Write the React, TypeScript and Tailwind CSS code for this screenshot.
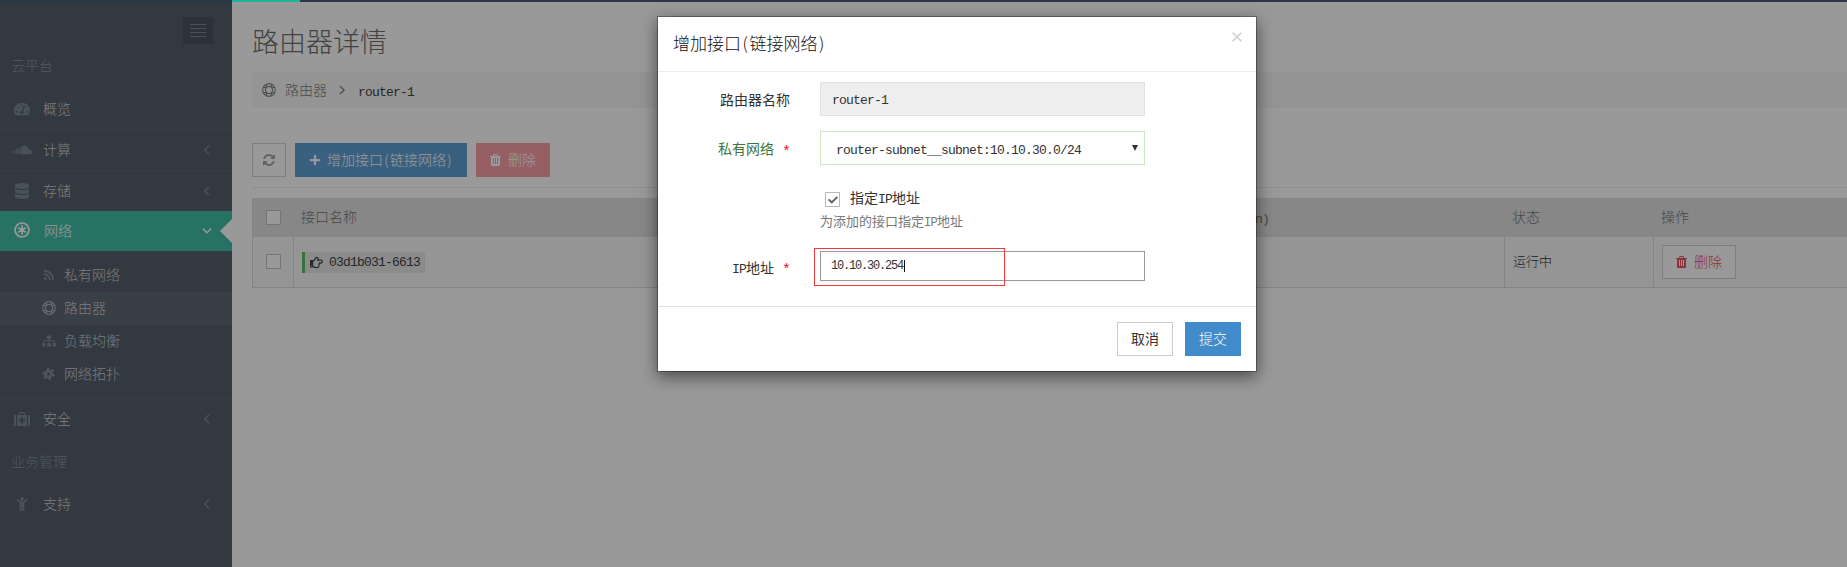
import React from "react";
import type { ReactNode } from "react";
import {
  FaTachometerAlt,
  FaSoundcloud,
  FaDatabase,
  FaRss,
  FaSitemap,
  FaChild,
  FaRegHandPointRight,
  FaPlus,
  FaCheck,
} from "react-icons/fa";

function RefreshIcon({ className }: { className: string }) {
  return (
    <svg viewBox="0 0 1536 1536" className={className} fill="currentColor">
      <path d="M1511 928q0 5-1 7-64 268-268 434.5t-478 166.5q-146 0-282.5-55t-243.5-157l-129 129q-19 19-45 19t-45-19-19-45v-448q0-26 19-45t45-19h448q26 0 45 19t19 45-19 45l-137 137q71 66 161 102t187 36q134 0 250-65t186-179q11-17 53-117 8-23 30-23h192q13 0 22.5 9.5t9.5 22.5zm25-800v448q0 26-19 45t-45 19h-448q-26 0-45-19t-19-45 19-45l138-138q-148-137-349-137-134 0-250 65t-186 179q-11 17-53 117-8 23-30 23h-199q-13 0-22.5-9.5t-9.5-22.5v-7q65-268 270-434.5t480-166.5q146 0 284 55.5t245 156.5l130-129q19-19 45-19t45 19 19 45z" />
    </svg>
  );
}

function TrashIcon({ className }: { className: string }) {
  return (
    <svg viewBox="192 128 1408 1536" className={className} fill="currentColor">
      <path d="M704 1376v-704q0-14-9-23t-23-9h-64q-14 0-23 9t-9 23v704q0 14 9 23t23 9h64q14 0 23-9t9-23zm256 0v-704q0-14-9-23t-23-9h-64q-14 0-23 9t-9 23v704q0 14 9 23t23 9h64q14 0 23-9t9-23zm256 0v-704q0-14-9-23t-23-9h-64q-14 0-23 9t-9 23v704q0 14 9 23t23 9h64q14 0 23-9t9-23zm-544-992h448l-48-117q-7-9-17-11h-317q-10 2-17 11zm928 32v64q0 14-9 23t-23 9h-96v948q0 83-47 143.5t-113 60.5h-832q-66 0-113-58.5t-47-141.5v-952h-96q-14 0-23-9t-9-23v-64q0-14 9-23t23-9h309l70-167q15-37 54-63t79-26h320q40 0 79 26t54 63l70 167h309q14 0 23 9t9 23z" />
    </svg>
  );
}

function NetworkIcon() {
  return (
    <svg viewBox="0 0 16 16" className="size-4" fill="none" stroke="currentColor">
      <circle cx="8" cy="8" r="7" strokeWidth="1.7" />
      <path d="M8 3v10M3.8 5.6l8.4 4.8M12.2 5.6l-8.4 4.8" strokeWidth="1.5" />
      <circle cx="8" cy="8" r="2.2" fill="currentColor" stroke="none" />
    </svg>
  );
}

function RingIcon() {
  return (
    <svg viewBox="0 0 14 14" className="size-3.5" fill="none" stroke="currentColor" strokeWidth="1.2">
      <circle cx="7" cy="7" r="6.3" />
      <circle cx="7" cy="7" r="3.6" />
      <path d="M4.500 1.300v3.200M9.500 1.300v3.200M4.500 9.500v3.200M9.500 9.500v3.200M1.300 4.500h3.200M1.300 9.500h3.200M9.500 4.500h3.200M9.500 9.500h3.200" />
    </svg>
  );
}

function PinwheelIcon() {
  return (
    <svg viewBox="0 0 14 14" className="size-3.5" fill="none" stroke="currentColor">
      <circle cx="6.500" cy="7" r="3" strokeWidth="2.8" />
      <path d="M5 4.500L7 1M8.500 4.200l3.200-1M9.300 6.800l3.300 2M8 9.500l-.500 3.500M5 10l-3.200.8M4 7.300L.8 5.400" strokeWidth="2.600" />
    </svg>
  );
}

function MedkitIcon() {
  return (
    <svg viewBox="0 0 16 14" className="h-3.5 w-4" fill="currentColor">
      <path d="M0 4a1 1 0 0 1 1-1h1v11H1a1 1 0 0 1-1-1zM14 3h1a1 1 0 0 1 1 1v9a1 1 0 0 1-1 1h-1z" />
      <path
        fillRule="evenodd"
        d="M3 3h2V1a1 1 0 0 1 1-1h4a1 1 0 0 1 1 1v2h2v11H3zM6.200 1.300V3h3.600V1.300zM7 5.200v2H5v2.200h2v2h2v-2h2V7.200H9v-2z"
      />
    </svg>
  );
}

function Chevron({ d, className }: { d: string; className: string }) {
  return (
    <svg viewBox="0 0 10 10" className={className} fill="none" stroke="currentColor" strokeWidth="1.5">
      <path d={d} />
    </svg>
  );
}

function Mono({ children }: { children: ReactNode }) {
  return <span className="font-['Liberation_Mono',monospace] text-[13px] leading-none tracking-[-0.8px]">{children}</span>;
}

type MenuRowProps = { icon: ReactNode; label: string; arrow?: boolean; border?: string };

function MenuRow({ icon, label, arrow = true, border = "" }: MenuRowProps) {
  return (
    <div className={`flex h-[41px] items-center border-[#5f6a76] pr-[20px] pl-3 ${border}`}>
      <span className="flex w-5 justify-center text-[#7a8797]">{icon}</span>
      <span className="ml-[11px] flex-1 pb-0.5 text-[#cdd0d6]">{label}</span>
      {arrow && <Chevron d="M7 .8L2.800 5 7 9.200" className="size-2.5 text-[#7a8797]" />}
    </div>
  );
}

function SubRow({ icon, label, active = false }: { icon: ReactNode; label: string; active?: boolean }) {
  return (
    <div className={`flex h-[33px] items-center pl-[42px] ${active ? "bg-[#5e6976]" : ""}`}>
      <span className={`flex w-3.5 justify-center pb-px ${active ? "text-[#aab1bb]" : "text-[#7e8b9a]"}`}>{icon}</span>
      <span className="ml-2 pb-1 text-[#c8ccd2]">{label}</span>
    </div>
  );
}

function Sidebar() {
  return (
    <aside className="flex w-[232px] shrink-0 flex-col bg-[#55606c]">
      <div className="flex h-[42px] justify-end pt-[15px] pr-[19px]">
        <div className="flex h-[27px] w-[30px] flex-col items-center justify-center gap-[3px] bg-[#4b535f]">
          <i className="h-px w-4 bg-[#7a8797]" />
          <i className="h-px w-4 bg-[#7a8797]" />
          <i className="h-px w-4 bg-[#7a8797]" />
          <i className="h-px w-4 bg-[#7a8797]" />
        </div>
      </div>
      <div className="flex h-[45px] items-center pb-[3px] pl-[11px] text-[#8493a5]">云平台</div>
      <MenuRow icon={<FaTachometerAlt className="size-4" />} label="概览" arrow={false} border="border-b" />
      <MenuRow icon={<FaSoundcloud className="size-5" />} label="计算" border="border-b" />
      <div className="flex h-10 flex-col">
        <MenuRow icon={<FaDatabase className="size-4" />} label="存储" />
      </div>
      <div className="flex h-10 items-center bg-[#43bea8] pl-3 text-white">
        <span className="flex w-5 justify-center pb-0.5">
          <NetworkIcon />
        </span>
        <span className="ml-3 flex-1 pb-0.5">网络</span>
        <Chevron d="M.8 2.500L5 6.700 9.200 2.500" className="mr-2 size-2.5" />
        <svg viewBox="0 0 12 24" className="h-6 w-3" fill="#fff">
          <path d="M12 0v24L0 12z" />
        </svg>
      </div>
      <div className="flex h-[148px] flex-col border-b border-[#5f6a76] pt-2">
        <SubRow icon={<FaRss className="size-3" />} label="私有网络" />
        <SubRow icon={<RingIcon />} label="路由器" active />
        <SubRow icon={<FaSitemap className="size-3.5" />} label="负载均衡" />
        <SubRow icon={<PinwheelIcon />} label="网络拓扑" />
      </div>
      <div className="-mt-px flex flex-col">
        <MenuRow icon={<MedkitIcon />} label="安全" />
      </div>
      <div className="flex h-11 items-center pb-px pl-[11px] text-[#8493a5]">业务管理</div>
      <MenuRow icon={<FaChild className="size-3.5" />} label="支持" />
    </aside>
  );
}

function Page() {
  return (
    <main className="flex min-w-0 flex-1 flex-col bg-white pl-5">
      <h1 className="mt-[19px] h-[40px] text-[27px] leading-[40px] font-light text-[#707070]">路由器详情</h1>
      <nav className="mt-[11px] flex h-9 items-center bg-[#f7f7f7] pl-2.5 text-[#888]">
        <RingIcon />
        <span className="ml-[9px] pb-0.5 text-[#808080]">路由器</span>
        <Chevron d="M3 1L7 5 3 9" className="mr-[11px] ml-2.5 size-2.5" />
        <span className="text-[#444]">
          <Mono>router-1</Mono>
        </span>
      </nav>
      <div className="mt-[35px] flex h-[34px] gap-[9px]">
        <div className="flex w-[34px] items-center justify-center border border-[#d3d3d3] text-[#a5a5a5]">
          <RefreshIcon className="size-3" />
        </div>
        <div className="flex w-[172px] items-center bg-[#62a0d6] pl-3.5 text-white">
          <FaPlus className="mr-[6px] size-[12px]" />
          <span className="flex pb-0.5">
            增加接口
            <span className="w-[7px] text-center">(</span>链接网络<span className="w-[7px] text-center">)</span>
          </span>
        </div>
        <div className="flex w-[74px] items-center bg-[#f99fa6] pl-3.5 text-white">
          <TrashIcon className="mr-[7px] h-3 w-[11px]" />
          <span className="pb-0.5">删除</span>
        </div>
      </div>
      <hr className="mt-[10px] border-[#eee]" />
      <section className="mt-[10px] border-b border-l border-[#dcdcdc]">
        <header className="flex h-[39px] items-center bg-[#e1e1e1] pl-[13px] text-[#777]">
          <i className="size-[15px] border border-[#c4c4c4] bg-white" />
          <span className="ml-[20px] w-[947px] pb-[3px]">接口名称</span>
          <span className="w-[264px] pb-0.5">
            <Mono>&nbsp;n)</Mono>
          </span>
          <span className="w-[149px] pb-[3px]">状态</span>
          <span className="pb-[3px]">操作</span>
        </header>
        <div className="flex h-[50px] bg-[#f9f9f9]">
          <div className="flex w-[41px] items-center border-r border-[#dcdcdc] pb-px pl-[13px]">
            <i className="size-[15px] border border-[#c4c4c4] bg-white" />
          </div>
          <div className="flex w-[1211px] items-center border-r border-[#dcdcdc] pl-2">
            <div className="flex h-[21px] w-[123px] items-center border-l-3 border-[#5bbd68] bg-[#e8e8e8] pl-[5px] text-[#444]">
              <FaRegHandPointRight className="mr-[6px] size-[13px]" />
              <Mono>03d1b031-6613</Mono>
            </div>
          </div>
          <div className="flex w-[149px] items-center border-r border-[#dcdcdc] pb-[3px] pl-2 text-[13px] text-[#333]">运行中</div>
          <div className="flex items-center pl-2">
            <div className="flex h-[34px] w-[74px] items-center border border-[#d3d3d3] bg-white pl-[13px] text-[#ec5565]">
              <TrashIcon className="mr-[7px] h-3 w-[11px]" />
              <span className="pb-0.5">删除</span>
            </div>
          </div>
        </div>
      </section>
    </main>
  );
}

function Field({ label, required = false, green = false, className, children }: {
  label: ReactNode;
  required?: boolean;
  green?: boolean;
  className: string;
  children: ReactNode;
}) {
  return (
    <div className={`flex items-center ${className}`}>
      <div className={`flex w-[132px] items-center justify-end ${green ? "text-[#3c763d]" : ""}`}>
        {label}
        {required && (
          <span className="ml-2 w-2 pt-[10px] text-center font-['Liberation_Mono',monospace] text-[15px] leading-3 text-[#e11]">*</span>
        )}
      </div>
      <div className="ml-[30px] flex w-[325px]">{children}</div>
    </div>
  );
}

function Dialog() {
  return (
    <div className="absolute top-4 left-[657px] flex h-[356px] w-[600px] flex-col border border-black/30 bg-white bg-clip-padding font-normal text-[#333] shadow-[0_5px_15px_rgba(0,0,0,0.5)]">
      <header className="flex h-[55px] items-start border-b border-[#eaeaea] pr-[14px] pl-[15px]">
        <h2 className="flex flex-1 text-[17px] leading-[51px] font-light text-[#111]">
          增加接口
          <span className="w-[8.5px] text-center">(</span>链接网络<span className="w-[8.5px] text-center">)</span>
        </h2>
        <svg viewBox="0 0 10 10" className="mt-[14.500px] size-2.5" stroke="#ccc" strokeWidth="1.4">
          <path d="M.7.7l8.600 8.600M9.300.7L.7 9.300" />
        </svg>
      </header>
      <Field label="路由器名称" className="mt-[10px] h-[34px]">
        <div className="flex h-[34px] flex-1 items-center border border-[#e2e2e2] bg-[#eee] pt-[3px] pl-[11px]">
          <Mono>router-1</Mono>
        </div>
      </Field>
      <Field label="私有网络" required green className="mt-[15px] h-[34px]">
        <div className="flex h-[34px] flex-1 items-center justify-between border border-[#d0e6c3] pr-[6px] pl-[15px]">
          <span className="pt-px leading-none">
            <Mono>router-subnet__subnet:10.10.30.0/24</Mono>
          </span>
          <svg viewBox="0 0 6 6" className="size-1.5" fill="#333">
            <path d="M0 0h6L3 6z" />
          </svg>
        </div>
      </Field>
      <div className="mt-[22px] flex h-[20px] items-center pl-[167px]">
        <i className="mt-[5px] flex size-[15px] items-center justify-center border border-[#b8b8b8]">
          <FaCheck className="size-[10px] text-[#666]" />
        </i>
        <span className="ml-[10px] leading-4">
          指定<Mono>IP</Mono>地址
        </span>
      </div>
      <p className="mt-1 h-5 pl-[162px] text-[13px] leading-5 text-[#777]">
        为添加的接口指定
        <span className="font-['Liberation_Mono',monospace] text-[12px] leading-none tracking-[-0.7px]">IP</span>地址
      </p>
      <Field
        label={
          <span className="pt-0.5">
            <Mono>IP</Mono>地址
          </span>
        }
        required
        className="mt-5 h-[30px]"
      >
        <div className="relative flex h-[30px] flex-1 items-center border border-[#999] pl-[10px]">
          <span className="font-['Liberation_Mono',monospace] text-[12px] leading-none tracking-[-1.2px]">10.10.30.254</span>
          <i className="ml-px h-3 w-px bg-[#111]" />
          <div className="absolute -top-1 -left-[7px] h-[38px] w-[191px] border border-[#f33a3a]" />
        </div>
      </Field>
      <footer className="mt-auto flex h-[65px] justify-end gap-3 border-t border-[#e2e2e2] pt-[15px] pr-[15px]">
        <button className="h-[34px] w-14 border border-[#ccc] pb-0.5">取消</button>
        <button className="h-[34px] w-14 bg-[#428bca] pb-0.5 font-light text-white">提交</button>
      </footer>
    </div>
  );
}

export default function App() {
  return (
    <div className="relative flex h-[567px] w-[1847px] flex-col overflow-hidden font-['Noto_Sans_CJK_SC',sans-serif] text-[14px] leading-5 font-light">
      <div className="relative z-10 flex h-0.5 shrink-0 bg-[#2b3846]">
        <i className="ml-[232px] w-[68px] bg-[#1fb39b]" />
      </div>
      <div className="flex min-h-0 flex-1">
        <Sidebar />
        <Page />
      </div>
      <div className="absolute inset-0 bg-black/40" />
      <Dialog />
    </div>
  );
}
